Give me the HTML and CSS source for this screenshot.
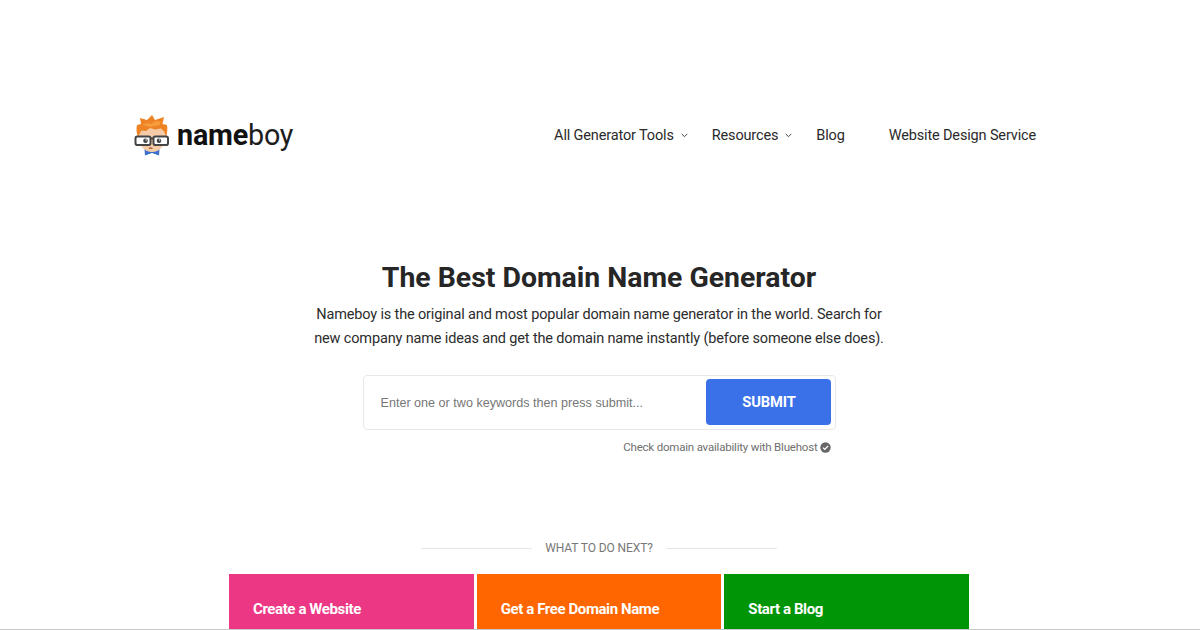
FILE: index.html
```html
<!DOCTYPE html>
<html lang="en">
<head>
<meta charset="utf-8">
<title>Nameboy</title>
<link rel="stylesheet" href="styles.css">
</head>
<body>
<div class="page">
  <header class="header">
    <a class="logo" href="#">
      <svg class="mascot" width="36" height="44" viewBox="0 0 36 44">
        <path d="M18 38.500l-7.500-2.500.5 6.500 7-2.500 7 2.500.5-6.500z" fill="#3b6fd0"/>
        <path d="M4 20c0 12 6 19 14 19s14-7 14-19V12H4z" fill="#f5cba8"/>
        <path d="M4 24c-1.500-4-2-8-1-12l4-1-1-6 7 2 5-5 3 5 9-3-1.500 7 4.500 1c.5 4 .5 8-1 12l-1.500-5-3.500-3.500-6 1-5-1.500-4 3-4.500-.5-1.500 2.500z" fill="#ee8325"/>
        <path d="M8 12l5-2 4 1 5-3 5 1-2 3.500-5 .5-4 1-3-1z" fill="#f59c3c"/>
        <rect x="1.500" y="23.500" width="15" height="8.500" rx="1.800" fill="#fff" stroke="#454545" stroke-width="2"/>
        <rect x="19.500" y="23.500" width="14.500" height="8.500" rx="1.800" fill="#fff" stroke="#454545" stroke-width="2"/>
        <path d="M16.500 25.500h3" stroke="#454545" stroke-width="2"/>
        <circle cx="11.500" cy="27.800" r="2.300" fill="#444"/>
        <circle cx="25" cy="27.800" r="2.300" fill="#444"/>
        <circle cx="12.200" cy="27" r=".7" fill="#fff"/>
        <circle cx="25.700" cy="27" r=".7" fill="#fff"/>
        <path d="M15 35.500q2-1.200 3.500 0" stroke="#9a5a30" stroke-width="1.100" fill="none"/>
      </svg>
      <span class="wordmark"><b>name</b>boy</span>
    </a>
    <nav class="nav">
      <a class="nav-item nav-tools" href="#">All Generator Tools<svg class="chev" width="7" height="5" viewBox="0 0 7 5"><path d="M.7.9l2.800 2.800L6.300.9" fill="none" stroke="#444" stroke-width="1"/></svg></a>
      <a class="nav-item nav-res" href="#">Resources<svg class="chev" width="7" height="5" viewBox="0 0 7 5"><path d="M.7.9l2.800 2.800L6.300.9" fill="none" stroke="#444" stroke-width="1"/></svg></a>
      <a class="nav-item nav-blog" href="#">Blog</a>
      <a class="nav-item" href="#">Website Design Service</a>
    </nav>
  </header>
  <main class="hero">
    <h1 class="title">The Best Domain Name Generator</h1>
    <p class="lead">Nameboy is the original and most popular domain name generator in the world. Search for<br>new company name ideas and get the domain name instantly (before someone else does).</p>
    <form class="search">
      <span class="placeholder">Enter one or two keywords then press submit...</span>
      <span class="submit">SUBMIT</span>
    </form>
    <div class="check">Check domain availability with Bluehost
      <svg class="tick" width="11" height="11" viewBox="0 0 11 11"><circle cx="5.500" cy="5.500" r="5.200" fill="#666"/><path d="M3 5.600l1.800 1.800L8 4" fill="none" stroke="#fff" stroke-width="1.300"/></svg>
    </div>
  </main>
  <div class="next"><span class="rule"></span><span class="next-label">WHAT TO DO NEXT?</span><span class="rule"></span></div>
  <div class="cards">
    <a class="card pink" href="#">Create a Website</a>
    <a class="card orange" href="#">Get a Free Domain Name</a>
    <a class="card green" href="#">Start a Blog</a>
  </div>
</div>
<div class="fold"></div>
</body>
</html>
```
FILE: styles.css
```css
* { box-sizing: border-box; }
html, body { margin: 0; height: 630px; overflow: hidden; background: #fff; }
body { font-family: Roboto, "Liberation Sans", sans-serif; color: #222; position: relative; }
a { color: inherit; text-decoration: none; }
.page { width: 1198px; display: flex; flex-direction: column; align-items: center; padding-top: 112px; }
.header { width: 932px; height: 46px; display: flex; justify-content: space-between; align-items: center; padding-left: 1px; }
.logo { display: flex; align-items: center; gap: 7px; }
.mascot { display: block; }
.wordmark { font-size: 28.700px; letter-spacing: -0.2px; color: #1d1d1d; line-height: 46px; }
.wordmark b { font-weight: 700; color: #111; }
.nav { display: flex; align-items: center; font-size: 14.500px; letter-spacing: -0.15px; color: #2a2a2a; padding-right: 29px; }
.nav-item { display: flex; align-items: center; }
.chev { margin-left: 7px; }
.nav-tools { margin-right: 24px; }
.nav-res { margin-right: 24px; }
.nav-blog { margin-right: 44px; }
.hero { display: flex; flex-direction: column; align-items: center; margin-top: 101px; }
.title { margin: 0; font-size: 28.400px; line-height: 38px; font-weight: 700; color: #262626; }
.lead { margin: 6px 0 0; font-size: 14.500px; letter-spacing: -0.15px; line-height: 24px; text-align: center; color: #2c2c2c; }
.search { margin: 24px 0 0 2px; width: 473px; height: 55px; border: 1px solid #e8e8e8; border-radius: 4px; display: flex; align-items: center; justify-content: space-between; padding: 3px 4px 4px 16px; }
.placeholder { font-family: "Liberation Sans", Arial, sans-serif; font-size: 12.600px; color: #777; margin-top: 2px; }
.submit { width: 125px; height: 46px; background: #3b71e8; color: #fff; border-radius: 4px; display: flex; align-items: center; justify-content: center; font-weight: 700; font-size: 14.700px; letter-spacing: -0.1px; }
.check { width: 473px; padding-right: 5px; margin: 10px 0 0 2px; display: flex; justify-content: flex-end; align-items: center; gap: 3px; font-size: 11.500px; letter-spacing: -0.2px; line-height: 14px; color: #6f6f6f; }
.next { display: flex; align-items: center; gap: 13px; margin-top: 87px; height: 14px; }
.rule { width: 111px; height: 1px; background: #e6e6e6; }
.next-label { font-size: 12px; letter-spacing: -0.1px; color: #777; }
.cards { display: flex; gap: 3px; margin-top: 19px; width: 740px; }
.card { width: 245px; height: 70px; padding: 26px 24px 0; color: #fff; font-weight: 700; font-size: 15px; letter-spacing: -0.4px; line-height: 18px; }
.pink { background: #ec3785; }
.orange { background: #ff6600; }
.green { background: #009507; }
.fold { position: absolute; left: 0; right: 0; bottom: 0; height: 1px; background: #c9c9c9; }
```
